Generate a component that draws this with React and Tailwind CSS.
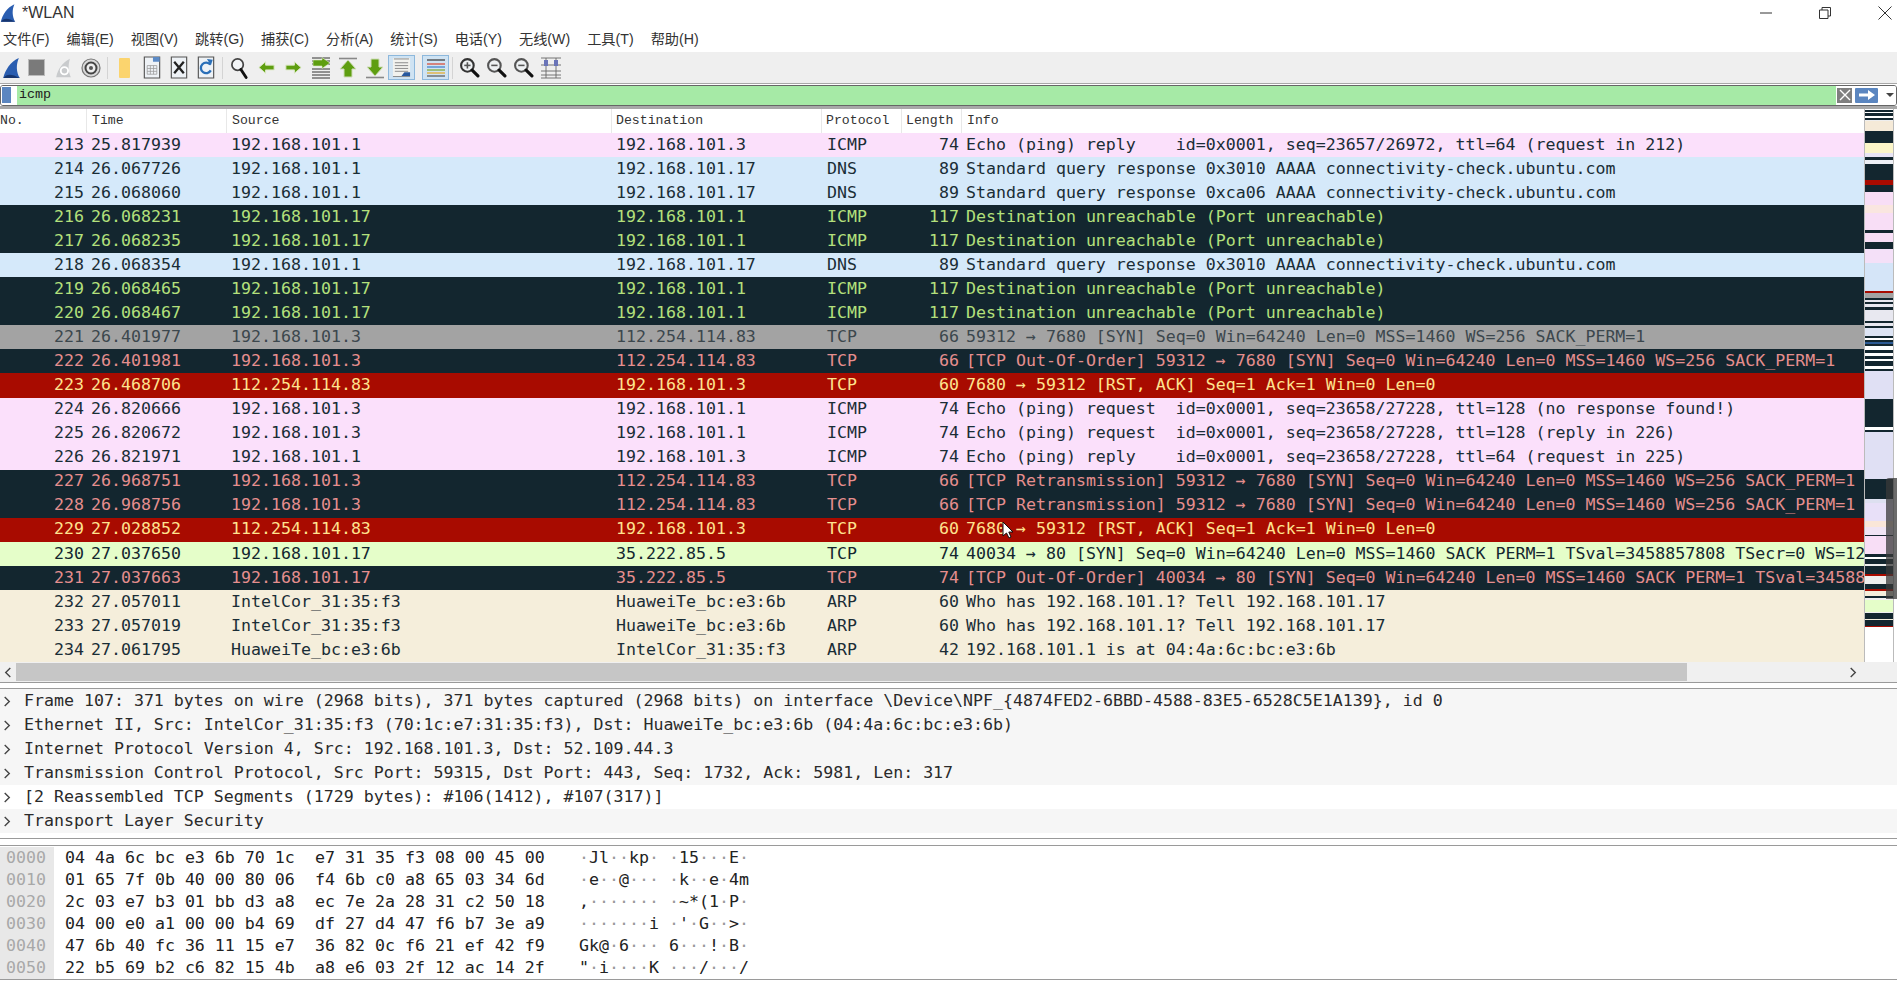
import React from "react";

const MONO = "font-['DejaVu_Sans_Mono',monospace] text-[16.6px] leading-none";

const STYLES = {
  pink: "bg-[#fbe0fb] text-[#1a2d36]",
  blue: "bg-[#d5e9fa] text-[#1a2d36]",
  err: "bg-[#13262f] text-[#b3e07c]",
  gray: "bg-[#a3a3a3] text-[#3c474d]",
  bad: "bg-[#13262f] text-[#e58e8e]",
  red: "bg-[#a80b00] text-[#ffe38f]",
  green: "bg-[#e5fec9] text-[#13262f]",
  arp: "bg-[#f5eedb] text-[#1a2d36]",
};

const UNREACH = "Destination unreachable (Port unreachable)";
const DNS1 = "Standard query response 0x3010 AAAA connectivity-check.ubuntu.com";
const SYN = "59312 → 7680 [SYN] Seq=0 Win=64240 Len=0 MSS=1460 WS=256 SACK_PERM=1";
const RST = "7680 → 59312 [RST, ACK] Seq=1 Ack=1 Win=0 Len=0";

const packets = [
  ["pink", 213, "25.817939", "192.168.101.1", "192.168.101.3", "ICMP", 74, "Echo (ping) reply    id=0x0001, seq=23657/26972, ttl=64 (request in 212)"],
  ["blue", 214, "26.067726", "192.168.101.1", "192.168.101.17", "DNS", 89, DNS1],
  ["blue", 215, "26.068060", "192.168.101.1", "192.168.101.17", "DNS", 89, "Standard query response 0xca06 AAAA connectivity-check.ubuntu.com"],
  ["err", 216, "26.068231", "192.168.101.17", "192.168.101.1", "ICMP", 117, UNREACH],
  ["err", 217, "26.068235", "192.168.101.17", "192.168.101.1", "ICMP", 117, UNREACH],
  ["blue", 218, "26.068354", "192.168.101.1", "192.168.101.17", "DNS", 89, DNS1],
  ["err", 219, "26.068465", "192.168.101.17", "192.168.101.1", "ICMP", 117, UNREACH],
  ["err", 220, "26.068467", "192.168.101.17", "192.168.101.1", "ICMP", 117, UNREACH],
  ["gray", 221, "26.401977", "192.168.101.3", "112.254.114.83", "TCP", 66, SYN],
  ["bad", 222, "26.401981", "192.168.101.3", "112.254.114.83", "TCP", 66, "[TCP Out-Of-Order] " + SYN],
  ["red", 223, "26.468706", "112.254.114.83", "192.168.101.3", "TCP", 60, RST],
  ["pink", 224, "26.820666", "192.168.101.3", "192.168.101.1", "ICMP", 74, "Echo (ping) request  id=0x0001, seq=23658/27228, ttl=128 (no response found!)"],
  ["pink", 225, "26.820672", "192.168.101.3", "192.168.101.1", "ICMP", 74, "Echo (ping) request  id=0x0001, seq=23658/27228, ttl=128 (reply in 226)"],
  ["pink", 226, "26.821971", "192.168.101.1", "192.168.101.3", "ICMP", 74, "Echo (ping) reply    id=0x0001, seq=23658/27228, ttl=64 (request in 225)"],
  ["bad", 227, "26.968751", "192.168.101.3", "112.254.114.83", "TCP", 66, "[TCP Retransmission] " + SYN],
  ["bad", 228, "26.968756", "192.168.101.3", "112.254.114.83", "TCP", 66, "[TCP Retransmission] " + SYN],
  ["red", 229, "27.028852", "112.254.114.83", "192.168.101.3", "TCP", 60, RST],
  ["green", 230, "27.037650", "192.168.101.17", "35.222.85.5", "TCP", 74, "40034 → 80 [SYN] Seq=0 Win=64240 Len=0 MSS=1460 SACK_PERM=1 TSval=3458857808 TSecr=0 WS=128"],
  ["bad", 231, "27.037663", "192.168.101.17", "35.222.85.5", "TCP", 74, "[TCP Out-Of-Order] 40034 → 80 [SYN] Seq=0 Win=64240 Len=0 MSS=1460 SACK_PERM=1 TSval=3458857808 TSecr=0"],
  ["arp", 232, "27.057011", "IntelCor_31:35:f3", "HuaweiTe_bc:e3:6b", "ARP", 60, "Who has 192.168.101.1? Tell 192.168.101.17"],
  ["arp", 233, "27.057019", "IntelCor_31:35:f3", "HuaweiTe_bc:e3:6b", "ARP", 60, "Who has 192.168.101.1? Tell 192.168.101.17"],
  ["arp", 234, "27.061795", "HuaweiTe_bc:e3:6b", "IntelCor_31:35:f3", "ARP", 42, "192.168.101.1 is at 04:4a:6c:bc:e3:6b"],
];

const details = [
  ["Frame 107: 371 bytes on wire (2968 bits), 371 bytes captured (2968 bits) on interface \\Device\\NPF_{4874FED2-6BBD-4588-83E5-6528C5E1A139}, id 0", "bg-[#f6f6f6]"],
  ["Ethernet II, Src: IntelCor_31:35:f3 (70:1c:e7:31:35:f3), Dst: HuaweiTe_bc:e3:6b (04:4a:6c:bc:e3:6b)", "bg-[#f6f6f6]"],
  ["Internet Protocol Version 4, Src: 192.168.101.3, Dst: 52.109.44.3", "bg-[#f6f6f6]"],
  ["Transmission Control Protocol, Src Port: 59315, Dst Port: 443, Seq: 1732, Ack: 5981, Len: 317", "bg-[#f6f6f6]"],
  ["[2 Reassembled TCP Segments (1729 bytes): #106(1412), #107(317)]", "bg-white"],
  ["Transport Layer Security", "bg-[#f6f6f6]"],
];

const hexRows = [
  ["0000", "04 4a 6c bc e3 6b 70 1c", "e7 31 35 f3 08 00 45 00", "·Jl··kp· ·15···E·"],
  ["0010", "01 65 7f 0b 40 00 80 06", "f4 6b c0 a8 65 03 34 6d", "·e··@··· ·k··e·4m"],
  ["0020", "2c 03 e7 b3 01 bb d3 a8", "ec 7e 2a 28 31 c2 50 18", ",······· ·~*(1·P·"],
  ["0030", "04 00 e0 a1 00 00 b4 69", "df 27 d4 47 f6 b7 3e a9", "·······i ·'·G··>·"],
  ["0040", "47 6b 40 fc 36 11 15 e7", "36 82 0c f6 21 ef 42 f9", "Gk@·6··· 6···!·B·"],
  ["0050", "22 b5 69 b2 c6 82 15 4b", "a8 e6 03 2f 12 ac 14 2f", "\"·i····K ···/···/"],
];

const menus = ["文件(F)", "编辑(E)", "视图(V)", "跳转(G)", "捕获(C)", "分析(A)", "统计(S)", "电话(Y)", "无线(W)", "工具(T)", "帮助(H)"];

// overview stripes next to the packet list: colour, height
const D = "#13262f";
const stripes = [
  ["#fff", 1], [D, 2], ["#fff", 1], [D, 3], ["#fff", 2], [D, 2], ["#eee", 1], ["#f5ead8", 10], [D, 12], ["#fbf5c8", 10], ["#e8e4f4", 4], [D, 3], ["#eef0f6", 4],
  [D, 16], ["#a80b00", 5], [D, 7], ["#f8def6", 13], ["#fae6e0", 8], ["#f8def6", 17], [D, 3], ["#f8def6", 9], [D, 7], ["#f4e0f8", 14], ["#d5e5f8", 28], ["#a80b00", 2],
  ["#a3a3a3", 5], [D, 2], ["#e8e8f0", 2], [D, 2], ["#e8e8f0", 3], [D, 3], ["#e8e8f0", 11], [D, 2], ["#e8e8f0", 3], [D, 2], ["#dde4f4", 8], [D, 2], ["#fff", 2], [D, 2],
  ["#2c5a94", 2], [D, 2], ["#fff", 4], [D, 3], ["#fff", 3], [D, 3], ["#fff", 2], [D, 5], ["#fff", 3], [D, 2], ["#e0e0f4", 28], [D, 28], ["#fff", 3], [D, 2],
  ["#e0e0f4", 47], [D, 20], ["#dde0f0", 4], ["#e8e0f8", 18], ["#fae6d8", 6], ["#f0e4f4", 8], [D, 1], ["#f8def6", 18], [D, 3], ["#fff", 2], [D, 5], ["#eee", 2], [D, 8],
  ["#a80b00", 2], ["#eee", 8], [D, 5], ["#a80b00", 2], ["#f4eedc", 5], [D, 2], ["#f0f0f0", 2], ["#e5fec9", 12], ["#f0f0f0", 1], [D, 6], ["#f4eedc", 1], [D, 6], ["#a80b00", 1],
];

const Shark = ({ className }) => (
  <svg viewBox="0 0 20 24" className={className}>
    <path d="M1 23 C3 14 9 5 18 1 C15 8 15 16 19 23 Z" fill="#2a5db0" />
    <path d="M1 23 C5 18 10 18 19 23 Z" fill="#16356f" />
  </svg>
);

const Lens = ({ sign, dim }) => (
  <svg viewBox="0 0 20 20" className="h-[21px] w-[21px]">
    <circle cx="8" cy="8" r="6" fill="#eef1f3" stroke={dim ? "#555" : "#333"} strokeWidth="2" />
    <path d="M12.5 12.5 L18 18" stroke="#111" strokeWidth="3" strokeLinecap="round" />
    {sign && <path d="M5 8 H11" stroke="#555" strokeWidth="1.5" />}
    {sign === "+" && <path d="M8 5 V11" stroke="#555" strokeWidth="1.5" />}
  </svg>
);

const GreenArrow = ({ dir }) => (
  <svg viewBox="0 0 20 20" className="h-[19px] w-[19px]">
    <g transform={dir === "l" ? "" : "rotate(180 10 10)"}>
      <path d="M2 10 L9 4 V7.5 H18 V12.5 H9 V16 Z" fill="#5e9e10" stroke="#dbe8c4" strokeWidth="1" />
    </g>
  </svg>
);

const Lines = ({ children }) => (
  <svg viewBox="0 0 22 22" className="h-[22px] w-[22px]">
    <path d="M2 12 H20 M2 15 H20 M2 18 H20 M2 21 H20" stroke="#333" strokeWidth="1" />
    {children}
  </svg>
);

const Doc = ({ children }) => (
  <svg viewBox="0 0 20 24" className="h-[23px] w-[20px]">
    <path d="M2 1 H18 V23 H2 Z" fill="#eef2f6" stroke="#555" strokeWidth="1.2" />
    {children}
  </svg>
);

const icons = [
  <Shark key="start" className="h-[22px] w-[19px]" />,
  <div key="stop" className="h-[17px] w-[17px] bg-[#7a7a7a] border border-[#bbb]" />,
  <svg key="restart" viewBox="0 0 20 24" className="h-[22px] w-[19px]">
    <path d="M2 22 C4 13 9 6 17 2 C15 9 15 15 18 22 Z" fill="#c9cbcd" />
    <circle cx="11" cy="15" r="4" fill="none" stroke="#fff" strokeWidth="2" />
  </svg>,
  <svg key="opts" viewBox="0 0 20 20" className="h-[20px] w-[20px]">
    <circle cx="10" cy="10" r="9" fill="#d9d9d9" stroke="#777" strokeWidth="1.2" />
    <circle cx="10" cy="10" r="5.5" fill="#eee" stroke="#444" strokeWidth="2" />
    <circle cx="10" cy="10" r="2" fill="#555" />
  </svg>,
  "sep",
  <div key="folder" className="h-[20px] w-[11px] bg-[#fbd46e] rounded-[1px]" />,
  <Doc key="file">
    <path d="M5 10 H15 V19 H5 Z M5 13 H15 M5 16 H15 M8.3 10 V19 M11.6 10 V19" fill="none" stroke="#999" strokeWidth="0.8" />
    <path d="M11 1 H18 V6 H11 Z" fill="#5b8ac6" />
  </Doc>,
  <Doc key="close">
    <path d="M5 6 L15 18 M15 6 L5 18" stroke="#222" strokeWidth="2.4" />
  </Doc>,
  <Doc key="reload">
    <path d="M14.5 9 A5.5 5.5 0 1 0 15 15" fill="none" stroke="#2a6fb8" strokeWidth="2.4" />
    <path d="M11 3 L17 4 L15 10 Z" fill="#2a6fb8" />
  </Doc>,
  "sep",
  <svg key="find" viewBox="0 0 20 22" className="h-[22px] w-[19px]">
    <circle cx="8" cy="7.5" r="6" fill="#f3f5f7" stroke="#444" strokeWidth="1.8" />
    <path d="M11.5 12.5 L17 21" stroke="#111" strokeWidth="3" strokeLinecap="round" />
  </svg>,
  <GreenArrow key="back" dir="l" />,
  <GreenArrow key="fwd" dir="r" />,
  <Lines key="goto">
    <path d="M2 1 H20 M2 4 H20 M2 7 H20" stroke="#333" strokeWidth="1" />
    <path d="M3 3 H12 V0.5 L20 6 L12 11.5 V9 H3 Z" fill="#5e9e10" stroke="#dbe8c4" strokeWidth="0.6" />
  </Lines>,
  <svg key="first" viewBox="0 0 22 22" className="h-[22px] w-[22px]">
    <path d="M2 1.5 H20" stroke="#888" strokeWidth="1.6" />
    <path d="M11 3 L19 12 H15 V20 H7 V12 H3 Z" fill="#5e9e10" stroke="#cfdcb8" strokeWidth="1" />
  </svg>,
  <svg key="last" viewBox="0 0 22 22" className="h-[22px] w-[22px]">
    <path d="M2 20.5 H20" stroke="#888" strokeWidth="1.6" />
    <path d="M11 19 L19 10 H15 V2 H7 V10 H3 Z" fill="#5e9e10" stroke="#cfdcb8" strokeWidth="1" />
  </svg>,
  <div key="auto" className="flex h-[25px] w-[27px] items-center justify-center border border-[#8db8dc] bg-[#cfe3f3]">
    <svg viewBox="0 0 20 22" className="h-[21px] w-[19px]">
      <path d="M1 1 H19 V20 H1 Z" fill="#f2f2ee" />
      <path d="M2 2 H18 M3 6 H17 M3 9 H17 M3 12 H17 M3 15 H17 M1 20.5 H19" stroke="#888" strokeWidth="1" />
      <path d="M10 20 H19 V16 H13 Z" fill="#27589e" />
    </svg>
  </div>,
  "gap",
  <div key="color" className="flex h-[25px] w-[27px] items-center justify-center border border-[#8db8dc] bg-[#cfe3f3]">
    <svg viewBox="0 0 20 20" className="h-[20px] w-[20px]">
      <path d="M1 2 H19" stroke="#333" strokeWidth="1.2" />
      <path d="M1 6 H19" stroke="#d8422c" strokeWidth="1.2" />
      <path d="M1 9 H19" stroke="#3a7bc8" strokeWidth="1.2" />
      <path d="M1 12 H19" stroke="#7aa82c" strokeWidth="1.2" />
      <path d="M1 15 H19" stroke="#e8a820" strokeWidth="1.2" />
      <path d="M1 18 H19" stroke="#555" strokeWidth="1.2" />
    </svg>
  </div>,
  "sep",
  <Lens key="in" sign="+" />,
  <Lens key="out" sign="-" dim />,
  <Lens key="reset" sign="-" dim />,
  <svg key="resize" viewBox="0 0 20 22" className="h-[22px] w-[20px]">
    <path d="M0 1 H20 M0 21 H20 M0 8 H20 M0 14 H20 M0 18 H20 M5 1 V21 M15 1 V21" stroke="#666" strokeWidth="0.9" fill="none" />
    <path d="M3 3 H7 V9 H3 Z M13 3 H17 V9 H13 Z" fill="#6a74b8" />
  </svg>,
];

const Cols = ({ row }) => {
  const [, no, time, src, dst, proto, len, info] = row;
  return (
    <>
      <div className="w-[87px] pr-[3px] text-right">{no}</div>
      <div className="w-[140px] pl-[4px]">{time}</div>
      <div className="w-[385px] pl-[4px]">{src}</div>
      <div className="w-[210px] pl-[4px]">{dst}</div>
      <div className="w-[80px] pl-[5px]">{proto}</div>
      <div className="w-[60px] pr-[3px] text-right">{len}</div>
      <div className="min-w-0 flex-1 overflow-hidden pl-[4px] whitespace-pre">{info}</div>
    </>
  );
};

const Ascii = ({ text }) => (
  <span>
    {text.split("").map((ch, i) => (
      <span key={i} className={ch === "·" ? "text-[#999]" : ""}>{ch}</span>
    ))}
  </span>
);

const Chevron = ({ left }) => (
  <svg viewBox="0 0 8 12" className="h-[11px] w-[8px]">
    <path d={left ? "M6.5 1 L1.5 6 L6.5 11" : "M1.5 1 L6.5 6 L1.5 11"} fill="none" stroke="#444" strokeWidth="1.5" />
  </svg>
);

export default function App() {
  return (
    <div className="relative flex h-[983px] w-[1897px] flex-col overflow-hidden bg-white text-[#222] font-['Liberation_Sans','Noto_Sans_CJK_SC',sans-serif]">
      {/* title bar */}
      <div className="flex h-[26px] items-center">
        <Shark className="h-[20px] w-[16px]" />
        <span className="ml-[6px] text-[16px] leading-none text-[#333]">*WLAN</span>
        <div className="ml-auto flex items-center">
          <svg viewBox="0 0 12 12" className="mr-[47px] h-[12px] w-[12px]"><path d="M0 6 H12" stroke="#333" strokeWidth="1" /></svg>
          <svg viewBox="0 0 12 12" className="mr-[47px] h-[12px] w-[12px]"><path d="M.5 3 H9 V11.5 H.5 Z M3 3 V.5 H11.5 V9 H9" fill="none" stroke="#333" strokeWidth="1" /></svg>
          <svg viewBox="0 0 14 14" className="mr-[5px] h-[14px] w-[14px]"><path d="M.5 .5 L13.5 13.5 M13.5 .5 L.5 13.5" stroke="#333" strokeWidth="1" /></svg>
        </div>
      </div>

      {/* menu */}
      <div className="flex h-[26px] items-center gap-[17px] pl-[3px] text-[14.2px] leading-none text-[#333]">
        {menus.map((m) => (
          <span key={m}>{m}</span>
        ))}
      </div>

      {/* toolbar */}
      <div className="flex h-[31px] items-center bg-[#efefef]">
        {icons.map((icon, i) => {
          if (icon === "sep") {
            return (
              <div key={i} className="flex h-full w-[7px] items-center justify-center">
                <div className="h-[22px] w-px bg-[#d4d4d4]" />
              </div>
            );
          }
          if (icon === "gap") return <div key={i} className="w-[7px]" />;
          return (
            <div key={i} className={`flex items-center justify-center ${i === 0 ? "w-[23px]" : "w-[27px]"}`}>
              {icon}
            </div>
          );
        })}
      </div>

      {/* display filter */}
      <div className="flex h-[24px] items-center border-y border-[#a8a8a8] bg-white">
        <div className="flex h-[21px] flex-1 items-center overflow-hidden rounded-[3px] border border-[#666]">
          <div className="flex h-full w-[16px] items-center bg-white pl-[1px]">
            <div className="h-[16px] w-[9px] bg-[#5b86c0]" />
          </div>
          <div className="flex h-full flex-1 items-center bg-[#a6eaa6] pl-[2px] font-['Liberation_Mono',monospace] text-[13.4px] text-[#222]">icmp</div>
          <div className="flex h-full w-[60px] items-center bg-white">
            <div className="ml-[1px] flex h-[15px] w-[15px] items-center justify-center bg-[#7f7f7f]">
              <svg viewBox="0 0 12 12" className="h-[12px] w-[12px]"><path d="M1 1 L11 11 M11 1 L1 11" stroke="#fff" strokeWidth="1.4" /></svg>
            </div>
            <div className="ml-[3px] flex h-[15px] w-[23px] items-center justify-center rounded-[1px] bg-[#5b86c0]">
              <svg viewBox="0 0 16 10" className="h-[10px] w-[16px]"><path d="M0 3.5 H9 V0 L16 5 L9 10 V6.5 H0 Z" fill="#fff" /></svg>
            </div>
            <div className="ml-[8px] h-0 w-0 border-x-[4px] border-t-[4px] border-x-transparent border-t-[#444]" />
          </div>
        </div>
      </div>

      {/* packet list */}
      <div className="flex border-t-2 border-[#a8a8a8]">
        <div className="w-[1864px] overflow-hidden">
          <div className="flex h-[24px] items-center font-['Liberation_Mono',monospace] text-[13.2px] text-[#333]">
            <div className="w-[87px] border-r border-[#e8e8e8] leading-[24px]">No.</div>
            <div className="w-[140px] border-r border-[#e8e8e8] pl-[5px] leading-[24px]">Time</div>
            <div className="w-[385px] border-r border-[#e8e8e8] pl-[5px] leading-[24px]">Source</div>
            <div className="w-[210px] border-r border-[#e8e8e8] pl-[4px] leading-[24px]">Destination</div>
            <div className="w-[80px] border-r border-[#e8e8e8] pl-[4px] leading-[24px]">Protocol</div>
            <div className="w-[60px] border-r border-[#e8e8e8] pl-[4px] leading-[24px]">Length</div>
            <div className="pl-[5px] leading-[24px]">Info</div>
          </div>
          {packets.map((row) => (
            <div key={row[1]} className={`flex h-[24.05px] w-[1864px] items-center ${MONO} ${STYLES[row[0]]}`}>
              <Cols row={row} />
            </div>
          ))}
        </div>
        <div className="flex h-[553px] w-[30px] flex-col overflow-hidden border-x border-[#bbb]">
          {stripes.map(([color, h], i) => (
            <div key={i} className="shrink-0" style={{ backgroundColor: color, height: h }} />
          ))}
        </div>
        <div className="flex-1 bg-white" />
      </div>

      {/* horizontal scrollbar */}
      <div className="flex h-[20px] items-center bg-[#f0f0f0]">
        <div className="flex w-[16px] items-center justify-center"><Chevron left /></div>
        <div className="h-[18px] w-[1671px] bg-[#c6c6c6]" />
        <div className="ml-[162px]"><Chevron /></div>
      </div>
      <div className="h-[7px] border-y border-[#9a9a9a] border-b-[#9a9a9a] bg-white" />

      {/* packet details */}
      <div className={`h-[149px] ${MONO}`}>
        {details.map(([text, bg]) => (
          <div key={text} className={`flex h-[24px] items-center ${bg}`}>
            <div className="flex w-[24px] justify-start pl-[3px]"><Chevron /></div>
            <span className="whitespace-pre text-[#2a2a2a]">{text}</span>
          </div>
        ))}
      </div>
      <div className="h-[8px] border-y border-[#9a9a9a] bg-white" />

      {/* packet bytes */}
      <div className={`h-[134px] border-b border-[#9a9a9a] pt-px ${MONO}`}>
        {hexRows.map(([offset, a, b, ascii]) => (
          <div key={offset} className="flex h-[22px] items-center whitespace-pre text-[#222]">
            <div className="flex h-full w-[54px] items-center bg-[#e8e8e8] pl-[6px] text-[#a8a8a8]">{offset}</div>
            <div className="ml-[11px] w-[250px]">{a}</div>
            <div className="w-[264px]">{b}</div>
            <Ascii text={ascii} />
          </div>
        ))}
      </div>

      {/* overlay scrollbar thumb on the overview */}
      <div className="absolute top-[478px] right-0 h-[121px] w-[11px] rounded-tl-[3px] bg-[#3a3a3a]/75" />

      {/* mouse pointer */}
      <svg viewBox="0 0 12 18" className="absolute top-[521px] left-[1002px] h-[18px] w-[12px]">
        <path d="M1 1 V15 L4.5 12 L7 17 L9 16 L6.8 11 H11 Z" fill="#fff" stroke="#111" strokeWidth="1" />
      </svg>
    </div>
  );
}
